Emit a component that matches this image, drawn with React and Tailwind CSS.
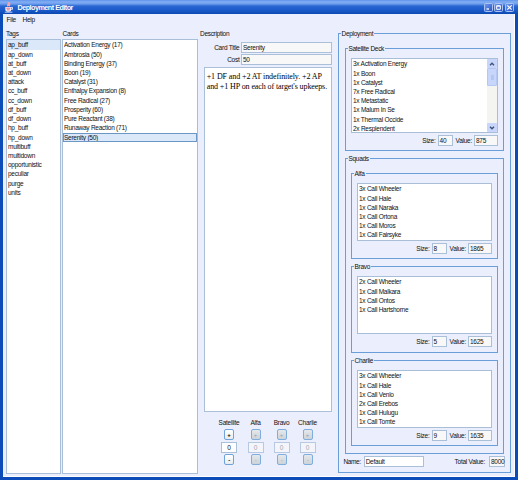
import clsx from 'clsx';

const tags = ['ap_buff', 'ap_down', 'at_buff', 'at_down', 'attack', 'cc_buff', 'cc_down', 'df_buff', 'df_down', 'hp_buff', 'hp_down', 'multibuff', 'multidown', 'opportunistic', 'peculiar', 'purge', 'units'];

const cards = ['Activation Energy (17)', 'Ambrosia (50)', 'Binding Energy (37)', 'Boon (19)', 'Catalyst (31)', 'Enthalpy Expansion (8)', 'Free Radical (27)', 'Prosperity (60)', 'Pure Reactant (38)', 'Runaway Reaction (71)', 'Serenity (50)'];

const satellite = ['3x Activation Energy', '1x Boon', '1x Catalyst', '7x Free Radical', '1x Metastatic', '1x Malum In Se', '1x Thermal Occide', '2x Resplendent'];

const squads = [
    { name: 'Alfa', size: 8, value: 1865, box: 'mt-[7px] h-[86px]', items: ['3x Call Wheeler', '1x Call Hale', '1x Call Naraka', '1x Call Ortona', '1x Call Moros', '1x Call Fairsyke'] },
    { name: 'Bravo', size: 5, value: 1625, box: 'mt-[7px] h-[87px]', items: ['2x Call Wheeler', '1x Call Malkara', '1x Call Ontos', '1x Call Hartshorne'] },
    { name: 'Charlie', size: 9, value: 1635, box: 'mt-[7px] h-[86px]', items: ['3x Call Wheeler', '1x Call Hale', '1x Call Venlo', '2x Call Erebos', '1x Call Hulugu', '1x Call Tomte'] },
];

const counters = [
    { name: 'Satellite', enabled: true },
    { name: 'Alfa', enabled: false },
    { name: 'Bravo', enabled: false },
    { name: 'Charlie', enabled: false },
];

function JavaIcon() {
    return (
        <svg viewBox="0 0 10 11" className="h-[11px] w-[10px]">
            <path d="M1.300 5h6v2.500a2.200 2.200 0 0 1-2 2.200H3.300a2.200 2.200 0 0 1-2-2.200z" fill="#f4f1fa" />
            <path d="M7.200 5.400h1.300v1.900H7.200" fill="none" stroke="#f0f0fa" strokeWidth=".9" />
            <path d="M4.300.2C6 1.500 2.800 2.200 4.200 4.300M6.200 1.200c-1.600 1-.4 1.600-1.100 3" fill="none" stroke="#f4a3b0" strokeWidth="1.700" />
            <path d="M2.300 6.200h4M2.800 7.900h3" stroke="#dc4c60" strokeWidth=".8" />
            <path d="M.8 10.200h7.600" stroke="#c3cdf2" strokeWidth="1" />
        </svg>
    );
}

function TitleButton({ children }) {
    return (
        <button className="flex h-[9px] w-[9px] items-center justify-center rounded-[1.5px] border border-[#a9c2f2] bg-linear-to-br from-[#6f97ee] to-[#2a55c6]">
            <svg viewBox="0 0 7 7" className="h-[7px] w-[7px] shrink-0" fill="none" stroke="white">{children}</svg>
        </button>
    );
}

function TitleBar() {
    return (
        <header className="flex h-[14px] shrink-0 items-center bg-[linear-gradient(to_bottom,#5e94ea_0px,#82aef3_2px,#6b9cec_4px,#2a67d2_6px,#1b5bca_10px,#0b48b2_14px)] pt-[1px] pr-[4px] pl-[4px]">
            <JavaIcon />
            <h1 className="ml-[3.500px] text-[7.200px] leading-[13px] font-bold tracking-[-0.500px] text-white">Deployment Editor</h1>
            <div className="ml-auto flex gap-[1.600px]">
                <TitleButton><path d="M1.500 5h2.500" strokeWidth="1.300" /></TitleButton>
                <TitleButton><path d="M1.700 1.800h3.600v3.500H1.700zM1.500 2h4" /></TitleButton>
                <TitleButton><path d="M1.300 1.300l4.400 4.400M5.700 1.300L1.300 5.700" strokeWidth="1.200" /></TitleButton>
            </div>
        </header>
    );
}

function List({ items, selected, focused, className }) {
    return (
        <ul className={clsx('overflow-hidden border border-[#a9bfd8] bg-white pt-[0.400px]', className)}>
            {items.map((item, i) => (
                <li
                    key={item}
                    className={clsx('h-[9.220px] pl-[1px] leading-[9.220px]', i === selected && 'bg-[#dae8fa]', i === selected && focused && 'outline-1 -outline-offset-1 outline-[#6c96c4]')}
                >
                    {item}
                </li>
            ))}
        </ul>
    );
}

function Group({ title, className, children }) {
    return (
        <section className={clsx('relative shrink-0 border border-[#6a9ed9]', className)}>
            <h2 className="absolute top-[-5px] left-[1.500px] bg-[#eaeefd] px-[1px] leading-[9px] tracking-[-0.300px]">{title}</h2>
            {children}
        </section>
    );
}

function Field({ value, className }) {
    return <div className={clsx('h-[11px] border border-[#a9c0d8] pl-[1px] leading-[9.500px]', className)}>{value}</div>;
}

function Totals({ size, value }) {
    return (
        <div className="mt-[2px] flex items-center justify-end">
            <span>Size:</span>
            <Field value={size} className="ml-[2px] w-[15px] bg-[#f8f8f8]" />
            <span className="ml-[3px]">Value:</span>
            <Field value={value} className="ml-[2px] w-[24px] bg-[#f8f8f8]" />
        </div>
    );
}

function Scrollbar() {
    return (
        <div className="flex w-[10px] shrink-0 flex-col bg-[#f4f4f1]">
            <div className="flex h-[9px] items-center justify-center rounded-[1px] bg-[#c8d6fb]">
                <svg viewBox="0 0 6 4" className="h-[4px] w-[6px]" fill="none" stroke="#3c4f78" strokeWidth="1.300"><path d="M1 3.200l2-2 2 2" /></svg>
            </div>
            <div className="flex h-[18px] items-center justify-center rounded-[1px] border border-[#b5c8f3] bg-[#c8d6fb]">
                <div className="h-[5px] w-[3px] bg-[#b4c6f2]"></div>
            </div>
            <div className="mt-auto flex h-[9px] items-center justify-center rounded-[1px] bg-[#c8d6fb]">
                <svg viewBox="0 0 6 4" className="h-[4px] w-[6px]" fill="none" stroke="#3c4f78" strokeWidth="1.300"><path d="M1 .8l2 2 2-2" /></svg>
            </div>
        </div>
    );
}

function StepButton({ enabled, children }) {
    return (
        <button
            className={clsx(
                'flex h-[11px] w-[10px] items-center justify-center rounded-[2px] border pt-[1px] text-[6px] leading-none',
                enabled ? 'border-[#6fa3da] bg-linear-to-b from-white to-[#e6ecf0] font-bold text-black' : 'border-[#7fadde] bg-linear-to-b from-[#e6e8ea] to-[#cdd3d8] text-[#9aa3ac]'
            )}
        >
            {children}
        </button>
    );
}

function Counter({ name, enabled }) {
    return (
        <div className="flex flex-col items-center">
            <span className="leading-[9px]">{name}</span>
            <div className="mt-[2px]"><StepButton enabled={enabled}>+</StepButton></div>
            <div className={clsx('mt-[2px] h-[11px] w-[16px] border text-center leading-[9.500px]', enabled ? 'border-[#a9c0d8] bg-white' : 'border-[#b6c9e0] bg-[#f3f5fa] text-[#a4a8ae]')}>0</div>
            <div className="mt-[1px]"><StepButton enabled={enabled}>-</StepButton></div>
        </div>
    );
}

export default function App() {
    return (
        <div className="flex h-[480px] w-[518px] flex-col overflow-hidden bg-[#0b4cb9] font-['Liberation_Sans',Arial,sans-serif] text-[6.500px] tracking-[-0.250px] whitespace-nowrap text-[#101010]">
            <TitleBar />
            <div className="mx-[3px] mb-[3px] flex min-h-0 flex-1 flex-col border-r border-b border-white bg-[#eaeefd]">
                <nav className="flex h-[11px] shrink-0 gap-[6.500px] pl-[3.500px] leading-[11px]">
                    <span>File</span>
                    <span>Help</span>
                </nav>

                <main className="flex min-h-0 flex-1 pl-[3px]">
                    <div className="flex w-[55px] flex-col pt-[4px]">
                        <h2 className="h-[10px] leading-[9px]">Tags</h2>
                        <List items={tags} selected={0} className="h-[435px]" />
                    </div>

                    <div className="ml-[1px] flex w-[136px] flex-col pt-[4px]">
                        <h2 className="h-[10px] pl-[0.500px] leading-[9px]">Cards</h2>
                        <List items={cards} selected={10} focused className="h-[435px]" />
                    </div>

                    <div className="ml-[2px] flex w-[132px] flex-col pt-[4px]">
                        <h2 className="h-[10px] leading-[9px] tracking-[-0.300px]">Description</h2>
                        <div className="mt-[3px] flex items-center justify-end">
                            <span className="mr-[1.500px]">Card Title</span>
                            <Field value="Serenity" className="w-[91px] bg-[#f8f8f8]" />
                        </div>
                        <div className="mt-[1px] flex items-center justify-end">
                            <span className="mr-[1.500px]">Cost</span>
                            <Field value="50" className="w-[91px] bg-[#f8f8f8]" />
                        </div>
                        <p className="mt-[2px] ml-[4px] h-[345px] border border-[#a9c0d8] bg-white pt-[3.500px] pl-[1.700px] font-['Liberation_Serif',serif] text-[8px] leading-[10.300px] tracking-[-0.100px] text-black">
                            +1 DF and +2 AT indefinitely. +2 AP<br />
                            and +1 HP on each of target's upkeeps.
                        </p>
                        <div className="mt-[6px] ml-[16px] grid grid-cols-[26px_27px_25px_27px]">
                            {counters.map((c) => <Counter key={c.name} {...c} />)}
                        </div>
                    </div>

                    <Group title="Deployment" className="mt-[8px] ml-[6px] flex h-[440px] w-[173px] flex-col px-[6px]">
                        <Group title="Satellite Deck" className="mt-[14px] h-[103px] px-[5px] pt-[9px]">
                            <div className="flex h-[75px] border border-[#a9bfd8] bg-white">
                                <List items={satellite} className="h-[73px] flex-1 border-none" />
                                <Scrollbar />
                            </div>
                            <Totals size={40} value={875} />
                        </Group>

                        <Group title="Squads" className="mt-[7px] flex h-[296px] flex-col px-[5px] pt-[7px]">
                            {squads.map((s) => (
                                <Group key={s.name} title={s.name} className={clsx(s.box, 'px-[5px] pt-[9px]')}>
                                    <List items={s.items} className="h-[58px]" />
                                    <Totals size={s.size} value={s.value} />
                                </Group>
                            ))}
                        </Group>

                        <div className="-mr-[1px] -ml-[1.500px] mt-[2px] flex items-center">
                            <span className="tracking-[-0.400px]">Name:</span>
                            <Field value="Default" className="ml-[3px] w-[60px] bg-white" />
                            <span className="ml-auto">Total Value:</span>
                            <Field value="8000" className="ml-[4px] w-[16px] bg-[#f8f8f8] pl-0" />
                        </div>
                    </Group>
                </main>
            </div>
        </div>
    );
}
